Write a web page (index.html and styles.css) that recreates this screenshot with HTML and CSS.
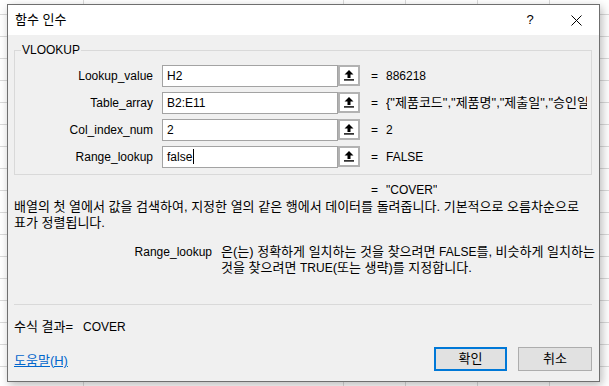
FILE: index.html
```html
<!DOCTYPE html>
<html lang="ko">
<head>
<meta charset="utf-8">
<title>함수 인수</title>
<link rel="stylesheet" href="styles.css">
</head>
<body>
<div class="dialog">
  <div class="titlebar">
    <span class="title ko">함수 인수</span>
    <span class="tb-btn">?</span>
    <span class="tb-btn">
      <svg width="11" height="11" viewBox="0 0 11 11"><path d="M0.5 0.5 L10.5 10.5 M10.5 0.5 L0.5 10.5" stroke="#000" stroke-width="1" fill="none"/></svg>
    </span>
  </div>
  <div class="content">
    <fieldset class="group">
      <legend>VLOOKUP</legend>
      <div class="args">
        <span class="arg-label">Lookup_value</span>
        <div class="ref-input">H2</div>
        <span class="ref-btn"><svg class="ref-icon" viewBox="0 0 10 11"><path d="M5 0 L9.5 4.5 H6.5 V8 H3.5 V4.5 H0.5 Z" fill="#000"/><rect x="0" y="9.2" width="10" height="1.4" fill="#000"/></svg></span>
        <span class="eq">=</span>
        <span class="val">886218</span>

        <span class="arg-label">Table_array</span>
        <div class="ref-input">B2:E11</div>
        <span class="ref-btn"><svg class="ref-icon" viewBox="0 0 10 11"><path d="M5 0 L9.5 4.5 H6.5 V8 H3.5 V4.5 H0.5 Z" fill="#000"/><rect x="0" y="9.2" width="10" height="1.4" fill="#000"/></svg></span>
        <span class="eq">=</span>
        <span class="val ko">{"제품코드","제품명","제출일","승인일</span>

        <span class="arg-label">Col_index_num</span>
        <div class="ref-input">2</div>
        <span class="ref-btn"><svg class="ref-icon" viewBox="0 0 10 11"><path d="M5 0 L9.5 4.5 H6.5 V8 H3.5 V4.5 H0.5 Z" fill="#000"/><rect x="0" y="9.2" width="10" height="1.4" fill="#000"/></svg></span>
        <span class="eq">=</span>
        <span class="val">2</span>

        <span class="arg-label">Range_lookup</span>
        <div class="ref-input">false<span class="caret"></span></div>
        <span class="ref-btn"><svg class="ref-icon" viewBox="0 0 10 11"><path d="M5 0 L9.5 4.5 H6.5 V8 H3.5 V4.5 H0.5 Z" fill="#000"/><rect x="0" y="9.2" width="10" height="1.4" fill="#000"/></svg></span>
        <span class="eq">=</span>
        <span class="val">FALSE</span>
      </div>
    </fieldset>

    <div class="fn-result"><span class="eq">=</span><span class="val">"COVER"</span></div>

    <p class="desc ko">배열의 첫 열에서 값을 검색하여, 지정한 열의 같은 행에서 데이터를 돌려줍니다. 기본적으로 오름차순으로<br>표가 정렬됩니다.</p>

    <div class="arg-help">
      <span class="arg-help-name">Range_lookup</span>
      <p class="arg-help-text ko">은(는) 정확하게 일치하는 것을 찾으려면 <span class="en">FALSE</span>를, 비슷하게 일치하는<br>것을 찾으려면 <span class="en">TRUE</span>(또는 생략)를 지정합니다.</p>
    </div>

    <hr class="sep">

    <div class="result"><span class="result-label ko">수식 결과=</span><span class="result-val">COVER</span></div>

    <div class="footer">
      <a class="help-link ko" href="#">도움말(H)</a>
      <div class="buttons">
        <span class="btn btn-primary ko">확인</span>
        <span class="btn ko">취소</span>
      </div>
    </div>
  </div>
</div>
</body>
</html>
```

FILE: styles.css
```css
html, body {
  margin: 0;
  padding: 0;
}
body {
  width: 609px;
  height: 386px;
  overflow: hidden;
  font-family: "Liberation Sans", "Noto Sans CJK KR", sans-serif;
  font-size: 12px;
  line-height: 16px;
  color: #000;
  background-color: #fff;
  background-image:
    linear-gradient(#dadada, #dadada),
    linear-gradient(#dadada, #dadada),
    linear-gradient(#dadada, #dadada),
    linear-gradient(#dadada, #dadada),
    linear-gradient(#dadada, #dadada),
    repeating-linear-gradient(to bottom, transparent 0 14px, #dadada 14px 15px, transparent 15px 22px);
  background-position: 83px 0, 343px 0, 405px 0, 477px 0, 549px 0, 0 0;
  background-size: 1px 100%, 1px 100%, 1px 100%, 1px 100%, 1px 100%, 100% 100%;
  background-repeat: no-repeat;
}

.ko {
  font-size: 13px;
  line-height: 16px;
}
.en {
  font-size: 12px;
}

.dialog {
  box-sizing: border-box;
  width: 593px;
  margin: 4px 0 0 7px;
  border: 1px solid #6f6f6f;
  background: #f0f0f0;
  box-shadow: 2px 3px 9px rgba(0, 0, 0, 0.28);
}

.titlebar {
  display: flex;
  align-items: center;
  height: 30px;
  background: #fff;
}
.title {
  flex: 1;
  padding-left: 7px;
}
.tb-btn {
  width: 46px;
  height: 30px;
  display: flex;
  align-items: center;
  justify-content: center;
  font-size: 13px;
}

.content {
  padding: 0 7px 10px 6px;
}

.group {
  margin: 7px 0 0 0;
  padding: 7px 4px 6px 0;
  border: 1px solid #d9d9d9;
  min-width: 0;
}
.group legend {
  margin-left: 6px;
  padding: 0 1px;
  line-height: 16px;
}

.args {
  display: grid;
  grid-template-columns: 147px 176px 22px 26px 1fr;
  grid-auto-rows: 22px;
  row-gap: 5px;
  align-items: center;
}
.arg-label {
  text-align: right;
  padding-right: 9px;
}
.ref-input {
  box-sizing: border-box;
  height: 22px;
  border: 1px solid #a3a3a3;
  background: #fff;
  padding: 0 4px;
  line-height: 20px;
  white-space: nowrap;
  overflow: hidden;
}
.caret {
  display: inline-block;
  width: 1px;
  height: 15px;
  background: #000;
  vertical-align: -3px;
  margin-left: 1px;
}
.ref-btn {
  box-sizing: border-box;
  height: 21px;
  align-self: start;
  border: 2px solid #b2b2b2;
  background: #fff;
  display: flex;
  align-items: center;
  justify-content: center;
}
.ref-icon {
  width: 10px;
  height: 11px;
}
.eq {
  padding-left: 11px;
}
.val {
  white-space: nowrap;
  overflow: hidden;
  line-height: 20px;
}

.fn-result {
  display: flex;
  margin-top: 7px;
  padding-left: 357px;
}
.fn-result .eq {
  padding-left: 0;
  width: 15px;
}
.fn-result .val {
  line-height: 16px;
}

.desc {
  margin: 1px 0 0 0;
  white-space: nowrap;
}

.arg-help {
  display: grid;
  grid-template-columns: 198px 1fr;
  column-gap: 9px;
  margin-top: 13px;
}
.arg-help-name {
  text-align: right;
}
.arg-help-text {
  margin: 0;
  line-height: 15px;
  white-space: nowrap;
}

.sep {
  margin: 28px 0 0 0;
  border: 0;
  height: 1px;
  background: #d9d9d9;
}

.result {
  margin-top: 14px;
  display: flex;
  align-items: baseline;
}
.result-val {
  margin-left: 10px;
}

.footer {
  margin-top: 12px;
  display: flex;
  align-items: center;
  justify-content: space-between;
}
.help-link {
  color: #0066cc;
  text-decoration: underline;
  margin-top: 3px;
}
.buttons {
  display: flex;
  gap: 11px;
}
.btn {
  box-sizing: border-box;
  width: 74px;
  height: 24px;
  border: 1px solid #adadad;
  background: #e1e1e1;
  display: flex;
  align-items: center;
  justify-content: center;
}
.btn-primary {
  width: 73px;
  border: 2px solid #0078d7;
}
```
